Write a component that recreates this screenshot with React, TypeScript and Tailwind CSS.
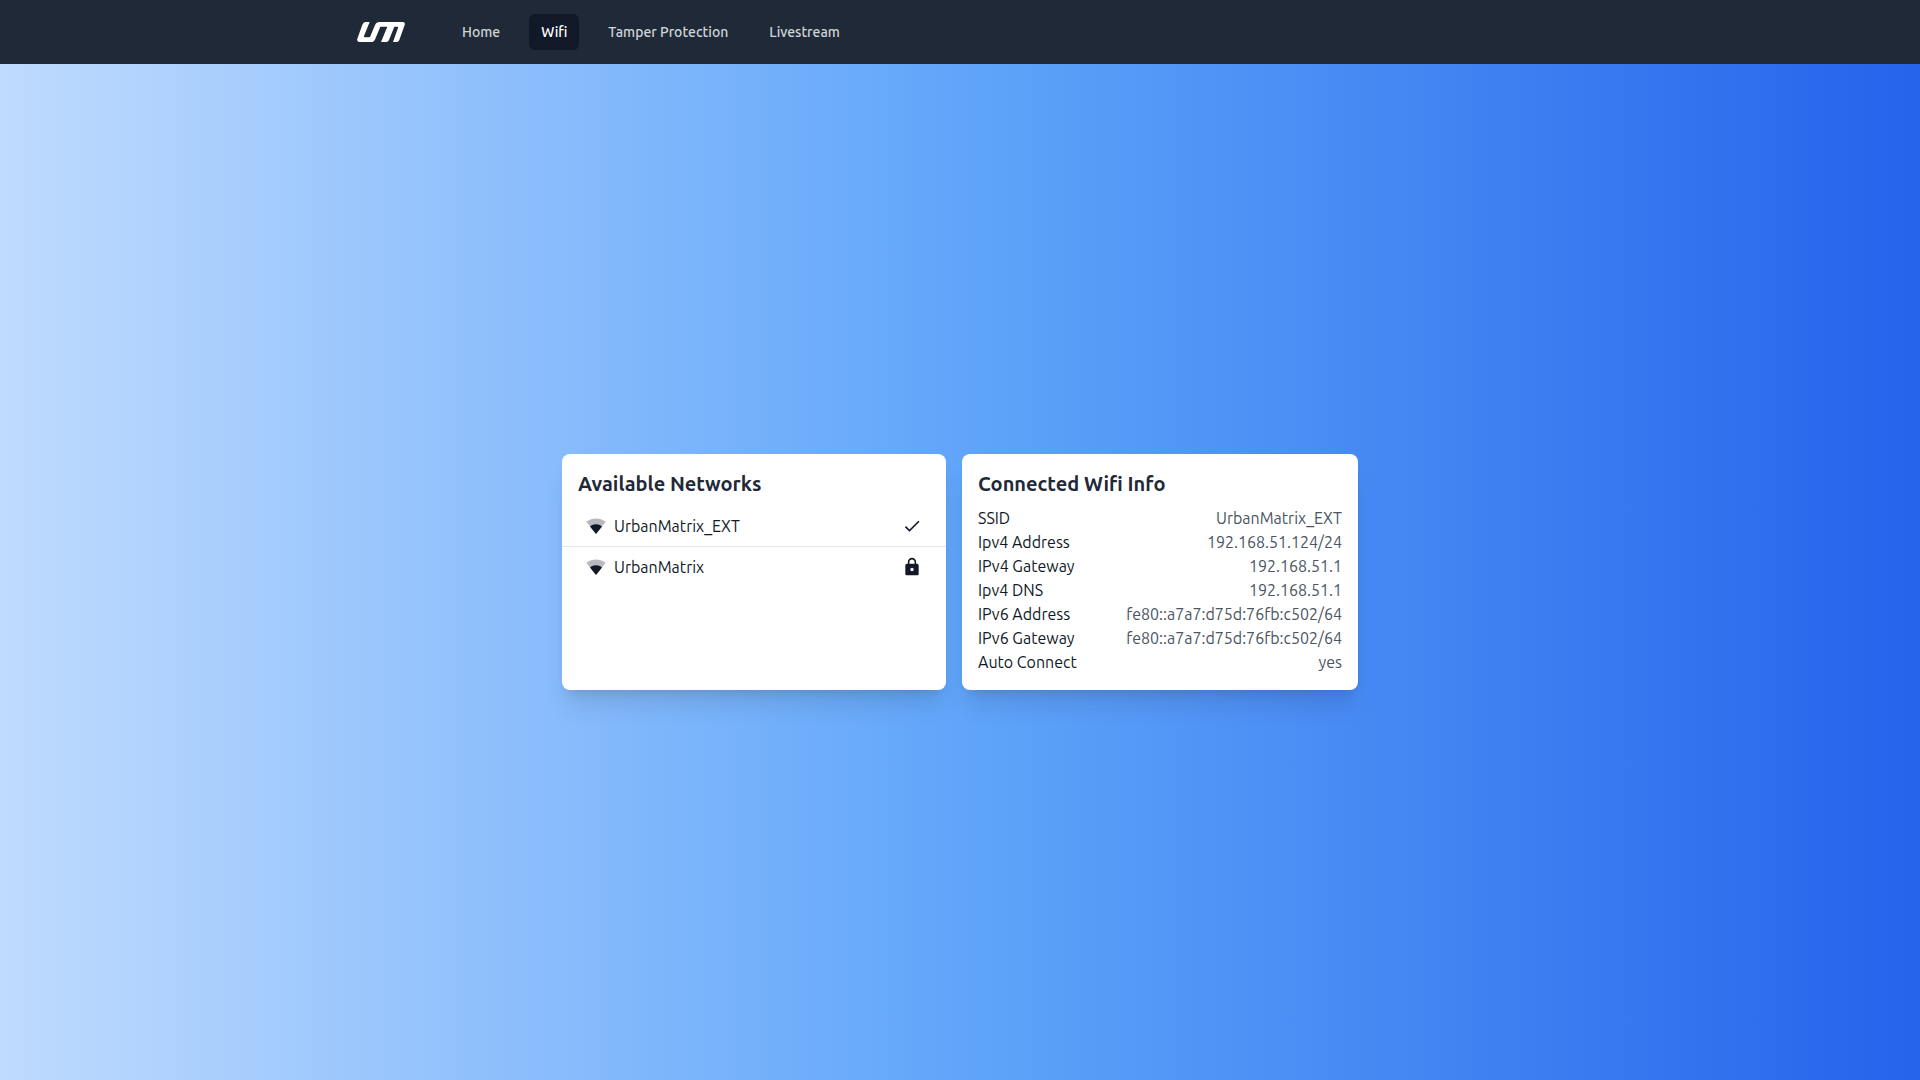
import { MdCheck, MdLock, MdSignalWifi2Bar } from "react-icons/md";

const links = [
  { name: "Home", current: false },
  { name: "Wifi", current: true },
  { name: "Tamper Protection", current: false },
  { name: "Livestream", current: false },
];

const networks = [
  { ssid: "UrbanMatrix_EXT", connected: true },
  { ssid: "UrbanMatrix", connected: false },
];

const info = [
  ["SSID", "UrbanMatrix_EXT"],
  ["Ipv4 Address", "192.168.51.124/24"],
  ["IPv4 Gateway", "192.168.51.1"],
  ["Ipv4 DNS", "192.168.51.1"],
  ["IPv6 Address", "fe80::a7a7:d75d:76fb:c502/64"],
  ["IPv6 Gateway", "fe80::a7a7:d75d:76fb:c502/64"],
  ["Auto Connect", "yes"],
];

function Logo() {
  return (
    <svg viewBox="0 0 144 60" className="h-5 w-12 fill-white" role="img" aria-label="UrbanMatrix">
      <path d="M25 0H38L21 42Q20 46 23 46H36Q39 46 40 43L54 9Q58 0 66 0H137Q146 0 143 9L127 54Q125 60 119 60H108L123 18Q124 14 121 14H112L96 54Q94 60 88 60H72L91 14H70L55 50Q51 60 43 60H8Q-2 60 1 50L16 8Q19 0 25 0Z" />
    </svg>
  );
}

function Navbar() {
  return (
    <nav className="bg-[#1f2937]">
      <div className="mx-auto flex h-16 w-full max-w-7xl items-center gap-[45px] px-[37px]">
        <a href="#" className="shrink-0">
          <Logo />
        </a>
        <div className="flex gap-[17px]">
          {links.map((link) => (
            <a
              key={link.name}
              href="#"
              aria-current={link.current ? "page" : undefined}
              className={
                link.current
                  ? "rounded-md bg-[#111827] px-3 py-2 text-sm font-medium text-white"
                  : "rounded-md px-3 py-2 text-sm font-medium text-[#d1d5db]"
              }
            >
              {link.name}
            </a>
          ))}
        </div>
      </div>
    </nav>
  );
}

function AvailableNetworks() {
  return (
    <section className="w-96 rounded-lg bg-white py-4 shadow-xl">
      <h2 className="mb-2 px-4 text-xl font-bold text-[#1f2937]">Available Networks</h2>
      <ul className="divide-y divide-[#e5e7eb]">
        {networks.map((network) => (
          <li key={network.ssid}>
            <button type="button" className="flex w-full items-center gap-2 px-6 py-2 text-left">
              <MdSignalWifi2Bar className="size-5" />
              <span className="grow">{network.ssid}</span>
              {network.connected ? <MdCheck className="size-5" /> : <MdLock className="size-5" />}
            </button>
          </li>
        ))}
      </ul>
    </section>
  );
}

function ConnectedInfo() {
  return (
    <section className="min-w-[396px] rounded-lg bg-white p-4 shadow-xl">
      <h2 className="mb-2 text-xl font-bold text-[#1f2937]">Connected Wifi Info</h2>
      <dl>
        {info.map(([label, value]) => (
          <div key={label} className="flex justify-between gap-8">
            <dt>{label}</dt>
            <dd className="text-[#4b5563]">{value}</dd>
          </div>
        ))}
      </dl>
    </section>
  );
}

export default function App() {
  return (
    <div className="flex min-h-screen flex-col bg-[linear-gradient(to_right,#bfdbfe,#60a5fa,#2563eb)] font-['Ubuntu','Noto_Sans',sans-serif] text-base text-[#111827]">
      <Navbar />
      <main className="flex grow flex-wrap content-center items-stretch justify-center gap-4">
        <AvailableNetworks />
        <ConnectedInfo />
      </main>
    </div>
  );
}
